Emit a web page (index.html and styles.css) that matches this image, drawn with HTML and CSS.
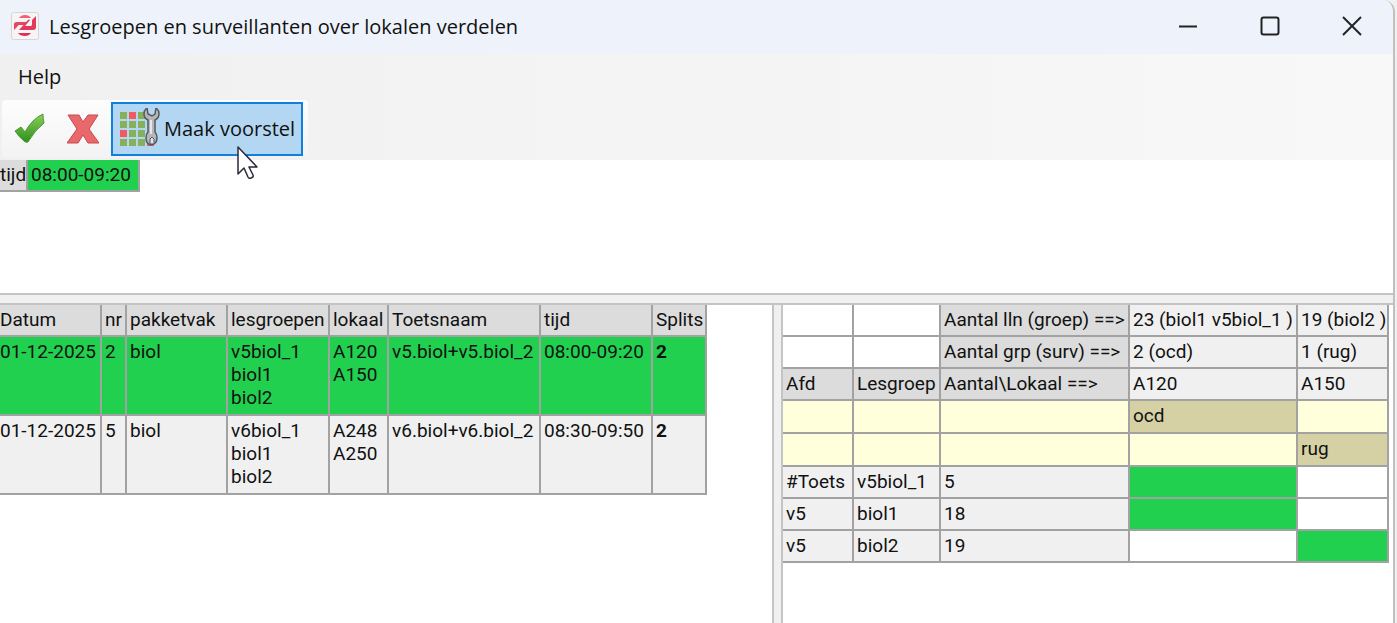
FILE: index.html
```html
<!DOCTYPE html>
<html lang="nl">
<head>
    <meta charset="UTF-8">
    <title>Lesgroepen en surveillanten over lokalen verdelen</title>
    <link rel="stylesheet" href="styles.css">
</head>
<body>

<div class="window">
    <header class="titlebar">
        <svg class="logo" width="28" height="28" viewBox="0 0 28 28">
            <rect x="0.5" y="0.5" width="27" height="27" rx="2" fill="#f6f4f5" stroke="#d5d5d8"/>
            <path d="M8 6Q10 3 14 3Q18 3 20 6Z" fill="#f0626f"/>
            <path d="M3 18V12Q3 10 6 10H16L13 13H8Q7 13 6 15Z" fill="#ea4560"/>
            <path d="M25 4V15Q25 18 22 18H8L17 8Q18 7 19 8L14 14H20Q21 14 21 12V8Z" fill="#e23a5c"/>
            <path d="M7 21H20Q18 24 14 24Q9 24 7 21Z" fill="#dd2f55"/>
        </svg>
        <h1>Lesgroepen en surveillanten over lokalen verdelen</h1>
        <div class="controls">
            <button type="button" aria-label="Minimaliseren">
                <svg width="20" height="20" viewBox="0 0 20 20"><path d="M1 10.500H19"/></svg>
            </button>
            <button type="button" aria-label="Maximaliseren">
                <svg width="20" height="20" viewBox="0 0 20 20"><rect x="1.500" y="1.500" width="17" height="17" rx="2"/></svg>
            </button>
            <button type="button" aria-label="Sluiten">
                <svg width="20" height="20" viewBox="0 0 20 20"><path d="M1 1L19 19M19 1L1 19"/></svg>
            </button>
        </div>
    </header>

    <div class="bars">
        <nav class="menu">
            <button type="button">Help</button>
        </nav>
        <div class="toolbar">
            <button type="button" class="tool" aria-label="OK">
                <svg width="32" height="32" viewBox="0 0 32 32">
                    <defs>
                        <linearGradient id="green" x1="0" y1="0" x2="0" y2="1">
                            <stop offset="0" stop-color="#8ad05c"/>
                            <stop offset="1" stop-color="#2f8f1c"/>
                        </linearGradient>
                    </defs>
                    <path d="M1 18L7 14L11 19Q18 6 29 1Q29 6 30 10Q21 17 14 29Q12 30 10 28Q5 24 1 18Z" fill="url(#green)" stroke="#4b9a37"/>
                </svg>
            </button>
            <button type="button" class="tool" aria-label="Annuleren">
                <svg width="32" height="32" viewBox="0 0 32 32">
                    <path d="M1 2H12L16 9L21 2H31L22 16L32 30H21L16 22L11 30H0L10 16Z" fill="#e8686b" stroke="#c9484c"/>
                </svg>
            </button>
            <button type="button" class="proposal">
                <svg width="40" height="40" viewBox="0 0 40 40">
                    <g fill="#86b05a">
                        <path d="M0 4h7v7H0zM18 4h7v7h-7zM0 13h7v7H0zM9 13h7v7H9zM18 13h7v7h-7zM9 22h7v7H9zM18 22h7v7h-7zM0 31h7v7H0zM9 31h7v7H9zM18 31h7v7h-7z"/>
                    </g>
                    <path d="M9 4h7v7H9zM0 22h7v7H0zM27 31h7v7h-7z" fill="#f05a60"/>
                    <path d="M27 0Q24 2 24 6Q24 10 28 12V24Q26 26 26 30Q26 36 31 37Q37 36 37 30Q37 26 35 24V12Q39 10 39 6Q39 2 36 0L35 6L32 8L28 6Z" fill="#b4b6b8" stroke="#55595e" stroke-width="1.500"/>
                    <path d="M31 12V26" stroke="#e4e6e8" stroke-width="2"/>
                    <path d="M30 36V31L32 29L34 31V36Z" fill="#dfe3e8" stroke="#55595e"/>
                </svg>
                Maak voorstel
                <svg class="cursor" width="24" height="36" viewBox="0 0 24 36">
                    <path d="M2 2V29L8 23L12 32Q13 34 15 33Q18 32 17 30L13 22H21Z" fill="#fff" stroke="#2a2a3a" stroke-width="1.500" stroke-linejoin="round"/>
                </svg>
            </button>
        </div>
    </div>

    <section class="times">
        <table>
            <colgroup>
                <col class="c-label"><col class="c-slot">
            </colgroup>
            <tr>
                <th scope="row">tijd</th>
                <td class="green">08:00-09:20</td>
            </tr>
        </table>
    </section>
    <div class="splitter-row"></div>

    <main class="panes">
        <section class="pane tests">
            <table>
                <colgroup>
                    <col class="c-date"><col class="c-nr"><col class="c-subject"><col class="c-groups">
                    <col class="c-room"><col class="c-name"><col class="c-time"><col class="c-splits">
                </colgroup>
                <thead>
                    <tr>
                        <th>Datum</th><th>nr</th><th>pakketvak</th><th>lesgroepen</th>
                        <th>lokaal</th><th>Toetsnaam</th><th>tijd</th><th>Splits</th>
                    </tr>
                </thead>
                <tbody>
                    <tr class="green">
                        <td>01-12-2025</td>
                        <td>2</td>
                        <td>biol</td>
                        <td>v5biol_1<br>biol1<br>biol2</td>
                        <td>A120<br>A150</td>
                        <td>v5.biol+v5.biol_2</td>
                        <td>08:00-09:20</td>
                        <td><strong>2</strong></td>
                    </tr>
                    <tr>
                        <td>01-12-2025</td>
                        <td>5</td>
                        <td>biol</td>
                        <td>v6biol_1<br>biol1<br>biol2</td>
                        <td>A248<br>A250</td>
                        <td>v6.biol+v6.biol_2</td>
                        <td>08:30-09:50</td>
                        <td><strong>2</strong></td>
                    </tr>
                </tbody>
            </table>
        </section>
        <div class="splitter"></div>
        <section class="pane rooms">
            <table>
                <colgroup>
                    <col class="c-dept"><col class="c-group"><col class="c-count"><col class="c-room1"><col class="c-room2">
                </colgroup>
                <tr>
                    <td class="empty"></td><td class="empty"></td>
                    <th scope="row">Aantal lln (groep) ==&gt;</th>
                    <td>23 (biol1 v5biol_1 )</td><td>19 (biol2 )</td>
                </tr>
                <tr>
                    <td class="empty"></td><td class="empty"></td>
                    <th scope="row">Aantal grp (surv) ==&gt;</th>
                    <td>2 (ocd)</td><td>1 (rug)</td>
                </tr>
                <tr>
                    <th>Afd</th><th>Lesgroep</th><th>Aantal\Lokaal ==&gt;</th>
                    <td>A120</td><td>A150</td>
                </tr>
                <tr class="surveillance">
                    <td></td><td></td><td></td><td class="assigned">ocd</td><td></td>
                </tr>
                <tr class="surveillance">
                    <td></td><td></td><td></td><td></td><td class="assigned">rug</td>
                </tr>
                <tr>
                    <td>#Toets</td><td>v5biol_1</td><td>5</td><td class="green"></td><td class="empty"></td>
                </tr>
                <tr>
                    <td>v5</td><td>biol1</td><td>18</td><td class="green"></td><td class="empty"></td>
                </tr>
                <tr>
                    <td>v5</td><td>biol2</td><td>19</td><td class="empty"></td><td class="green"></td>
                </tr>
            </table>
        </section>
    </main>
</div>

</body>
</html>
```
FILE: styles.css
```css
* {
    box-sizing: border-box;
}
html, body {
    height: 100%;
    margin: 0;
    background-color: #f0f0f0;
}
body {
    overflow: hidden;
    font-family: "Open Sans", "Noto Sans", sans-serif;
    font-size: 20px;
    color: #111;
}
button {
    border: 0;
    padding: 0;
    background: none;
    font: inherit;
    color: inherit;
}
.window {
    display: flex;
    flex-direction: column;
    height: 100%;
    margin-right: 2px;
    border-right: 2px solid #c0c0c0;
    border-top-right-radius: 12px;
    background-color: #fff;
    overflow: hidden;
}

/* title bar */
.titlebar {
    display: flex;
    align-items: center;
    height: 54px;
    flex-shrink: 0;
    padding: 0 0 2px 11px;
    background-color: #eef3fb;
}
.titlebar h1 {
    flex: 1;
    margin: 0 0 0 10px;
    font-size: 20px;
    font-weight: normal;
    white-space: nowrap;
}
.controls {
    display: flex;
    height: 52px;
}
.controls button {
    display: flex;
    align-items: center;
    justify-content: center;
    width: 82px;
}
.controls svg {
    fill: none;
    stroke: #222;
    stroke-width: 2;
}

/* menu and toolbar */
.bars {
    height: 106px;
    flex-shrink: 0;
    background: linear-gradient(to right, #f0f0f0, #f8f8f8);
}
.menu {
    display: flex;
    align-items: center;
    height: 46px;
    padding: 0 0 2px 18px;
}
.toolbar {
    display: flex;
    align-items: center;
    width: 306px;
    height: 58px;
    margin-left: 2px;
    padding-left: 12px;
    border-radius: 4px;
    background: linear-gradient(to bottom, #fdfdfd, #f3f3f3);
}
.tool {
    display: flex;
    margin-right: 21px;
}
.tool + .tool {
    margin-right: 12px;
}
.proposal {
    position: relative;
    display: flex;
    align-items: center;
    gap: 4px;
    width: 192px;
    height: 54px;
    flex-shrink: 0;
    padding: 0 0 2px 7px;
    border: 2px solid #0f80dc;
    background-color: #b3d6f2;
    white-space: nowrap;
}
.cursor {
    position: absolute;
    left: 123px;
    top: 41px;
    z-index: 1;
}

/* grids */
table {
    border-collapse: separate;
    border-spacing: 0;
    table-layout: fixed;
    width: 0;
    font-family: Roboto, "Liberation Sans", sans-serif;
    font-size: 19px;
    line-height: 23px;
}
th, td {
    height: 32px;
    padding: 3px 0 2px 3px;
    border-right: 2px solid #a2a2a2;
    border-bottom: 2px solid #a2a2a2;
    font-weight: normal;
    text-align: left;
    vertical-align: top;
    white-space: nowrap;
}
th {
    background-color: #dcdcdc;
}
td {
    background-color: #f0f0f0;
}
td.green, .green td {
    background-color: #22d04f;
}
.empty {
    background-color: #fff;
}
.times {
    height: 133px;
    flex-shrink: 0;
}
.times th:first-child, .tests th:first-child, .tests td:first-child {
    padding-left: 0;
}

/* splitters and panes */
.splitter-row {
    height: 12px;
    flex-shrink: 0;
    border: solid #c4c4c4;
    border-width: 2px 0;
    background-color: #f0f0f0;
}
.splitter {
    width: 11px;
    border: solid #c4c4c4;
    border-width: 0 2px;
    background-color: #f0f0f0;
}
.panes {
    display: flex;
    flex: 1;
}
.pane {
    min-width: 0;
    overflow: hidden;
}
.tests {
    flex: 772 1 0;
}
.rooms {
    flex: 610 1 0;
}
.tests tbody td {
    height: 79px;
}
.surveillance td {
    height: 33px;
    background-color: #ffffdb;
}
.surveillance .assigned {
    background-color: #d6d1a4;
}

/* column widths */
.c-label { width: 28px; }
.c-slot { width: 112px; }

.c-date { width: 102px; }
.c-nr { width: 25px; }
.c-subject { width: 101px; }
.c-groups { width: 102px; }
.c-room { width: 59px; }
.c-name { width: 152px; }
.c-time { width: 112px; }
.c-splits { width: 54px; }

.c-dept { width: 71px; }
.c-group { width: 87px; }
.c-count { width: 189px; }
.c-room1 { width: 168px; }
.c-room2 { width: 91px; }
```
